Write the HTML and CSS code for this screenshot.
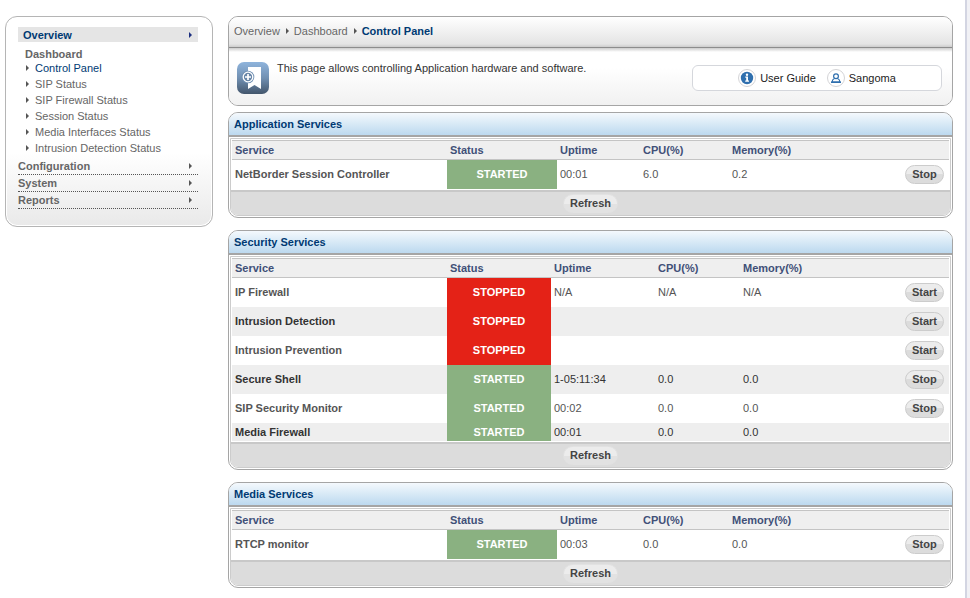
FILE: index.html
```html
<!DOCTYPE html>
<html lang="en">
<head>
<meta charset="UTF-8">
<meta name="viewport" content="width=device-width, initial-scale=1.0">
<title>Control Panel</title>
<link rel="stylesheet" href="styles.css">
</head>
<body>
<div class="page">
    <nav class="sidebar">
        <a class="menu-item active" href="#">Overview</a>
        <div class="submenu">
            <h3>Dashboard</h3>
            <ul>
                <li class="current"><a href="#">Control Panel</a></li>
                <li><a href="#">SIP Status</a></li>
                <li><a href="#">SIP Firewall Status</a></li>
                <li><a href="#">Session Status</a></li>
                <li><a href="#">Media Interfaces Status</a></li>
                <li><a href="#">Intrusion Detection Status</a></li>
            </ul>
        </div>
        <a class="menu-item" href="#">Configuration</a>
        <a class="menu-item" href="#">System</a>
        <a class="menu-item" href="#">Reports</a>
    </nav>

    <main class="content">
        <header class="intro">
            <div class="breadcrumb">
                <a href="#">Overview</a>
                <a href="#">Dashboard</a>
                <strong>Control Panel</strong>
            </div>
            <div class="intro-body">
                <svg class="intro-icon" width="32" height="32" viewBox="0 0 32 32">
                    <defs>
                        <linearGradient id="iconFill" x1="0" y1="0" x2="0" y2="1">
                            <stop offset="0" stop-color="#8fb4dc"/>
                            <stop offset="0.5" stop-color="#7190b2"/>
                            <stop offset="1" stop-color="#43566c"/>
                        </linearGradient>
                    </defs>
                    <rect width="32" height="32" rx="7" fill="url(#iconFill)"/>
                    <path d="M11 5h13v22l-6.500-4-6.500 4z" fill="#fff"/>
                    <circle cx="11" cy="15" r="6.300" fill="#6f8fb2"/>
                    <circle cx="11" cy="15" r="4.800" fill="#6886a8" stroke="#fff" stroke-width="1.300"/>
                    <path d="M11 12v6M8 15h6" stroke="#fff" stroke-width="1.700"/>
                </svg>
                <p>This page allows controlling Application hardware and software.</p>
                <div class="links">
                    <a href="#">
                        <svg width="18" height="18" viewBox="0 0 18 18">
                            <circle cx="9" cy="9" r="8.500" fill="#fff" stroke="#d3d3d6"/>
                            <circle cx="9" cy="9" r="6.200" fill="#2f6fae"/>
                            <circle cx="9" cy="5.700" r="1.200" fill="#fff"/>
                            <path d="M7.300 7.500h2.700v4h1v1.300H7.200v-1.300h1V8.700h-.9z" fill="#fff"/>
                        </svg>
                        User Guide
                    </a>
                    <a href="#">
                        <svg width="18" height="18" viewBox="0 0 18 18">
                            <circle cx="9" cy="9" r="8.500" fill="#fff" stroke="#d3d3d6"/>
                            <circle cx="9" cy="7.200" r="2.400" fill="#fff" stroke="#2f6fae" stroke-width="1.200"/>
                            <path d="M7.500 9.500c-1.500.5-2.300 1.800-2.500 3.500h8c-.2-1.700-1-3-2.500-3.500" fill="none" stroke="#2f6fae" stroke-width="1.200"/>
                            <path d="M4 13.200h10" stroke="#2f6fae" stroke-width="1.400"/>
                        </svg>
                        Sangoma
                    </a>
                </div>
            </div>
        </header>

        <section class="panel">
            <h2>Application Services</h2>
            <div class="panel-body">
                <table>
                    <thead>
                        <tr>
                            <th class="col-service">Service</th>
                            <th class="col-status">Status</th>
                            <th class="col-uptime">Uptime</th>
                            <th class="col-cpu">CPU(%)</th>
                            <th>Memory(%)</th>
                            <th class="col-action"></th>
                        </tr>
                    </thead>
                    <tbody>
                        <tr>
                            <td class="name">NetBorder Session Controller</td>
                            <td class="started">STARTED</td>
                            <td>00:01</td>
                            <td>6.0</td>
                            <td>0.2</td>
                            <td class="action"><button type="button">Stop</button></td>
                        </tr>
                    </tbody>
                </table>
                <div class="panel-footer"><button type="button" class="refresh">Refresh</button></div>
            </div>
        </section>

        <section class="panel">
            <h2>Security Services</h2>
            <div class="panel-body">
                <table class="security">
                    <thead>
                        <tr>
                            <th class="col-service">Service</th>
                            <th class="col-status">Status</th>
                            <th class="col-uptime">Uptime</th>
                            <th class="col-cpu">CPU(%)</th>
                            <th>Memory(%)</th>
                            <th class="col-action"></th>
                        </tr>
                    </thead>
                    <tbody>
                        <tr>
                            <td class="name">IP Firewall</td>
                            <td class="stopped">STOPPED</td>
                            <td>N/A</td>
                            <td>N/A</td>
                            <td>N/A</td>
                            <td class="action"><button type="button">Start</button></td>
                        </tr>
                        <tr>
                            <td class="name">Intrusion Detection</td>
                            <td class="stopped">STOPPED</td>
                            <td></td>
                            <td></td>
                            <td></td>
                            <td class="action"><button type="button">Start</button></td>
                        </tr>
                        <tr>
                            <td class="name">Intrusion Prevention</td>
                            <td class="stopped">STOPPED</td>
                            <td></td>
                            <td></td>
                            <td></td>
                            <td class="action"><button type="button">Start</button></td>
                        </tr>
                        <tr>
                            <td class="name">Secure Shell</td>
                            <td class="started">STARTED</td>
                            <td>1-05:11:34</td>
                            <td>0.0</td>
                            <td>0.0</td>
                            <td class="action"><button type="button">Stop</button></td>
                        </tr>
                        <tr>
                            <td class="name">SIP Security Monitor</td>
                            <td class="started">STARTED</td>
                            <td>00:02</td>
                            <td>0.0</td>
                            <td>0.0</td>
                            <td class="action"><button type="button">Stop</button></td>
                        </tr>
                        <tr>
                            <td class="name">Media Firewall</td>
                            <td class="started">STARTED</td>
                            <td>00:01</td>
                            <td>0.0</td>
                            <td>0.0</td>
                            <td></td>
                        </tr>
                    </tbody>
                </table>
                <div class="panel-footer"><button type="button" class="refresh">Refresh</button></div>
            </div>
        </section>

        <section class="panel">
            <h2>Media Services</h2>
            <div class="panel-body">
                <table>
                    <thead>
                        <tr>
                            <th class="col-service">Service</th>
                            <th class="col-status">Status</th>
                            <th class="col-uptime">Uptime</th>
                            <th class="col-cpu">CPU(%)</th>
                            <th>Memory(%)</th>
                            <th class="col-action"></th>
                        </tr>
                    </thead>
                    <tbody>
                        <tr>
                            <td class="name">RTCP monitor</td>
                            <td class="started">STARTED</td>
                            <td>00:03</td>
                            <td>0.0</td>
                            <td>0.0</td>
                            <td class="action"><button type="button">Stop</button></td>
                        </tr>
                    </tbody>
                </table>
                <div class="panel-footer"><button type="button" class="refresh">Refresh</button></div>
            </div>
        </section>
    </main>
</div>
</body>
</html>
```

FILE: styles.css
```css
* {
    box-sizing: border-box;
}

body {
    margin: 0;
    background-color: #f1f1f5;
    font-family: "Liberation Sans", Arial, Helvetica, sans-serif;
    font-size: 11px;
    line-height: 14px;
    color: #444;
}

a {
    color: #666;
    text-decoration: none;
}

h2, h3, p, ul {
    margin: 0;
    padding: 0;
    font-size: 11px;
}

.page {
    display: flex;
    align-items: flex-start;
    gap: 15px;
    min-height: 100vh;
    margin-right: 3px;
    padding: 16px 12px 10px 5px;
    border-right: 2px solid #d3d5e2;
    background-color: #fff;
}

/* side menu */
.sidebar {
    flex: 0 0 208px;
    padding: 10px 14px 17px 12px;
    border: 1px solid #b5b5b5;
    border-radius: 12px;
    background: linear-gradient(#fff 65%, #e9e9e9);
    box-shadow: inset 0 0 0 1px #fff;
}

.menu-item {
    display: flex;
    justify-content: space-between;
    align-items: center;
    height: 17px;
    padding-right: 6px;
    border-bottom: 1px dotted #555;
    font-weight: bold;
}

.menu-item::after,
.submenu li::before,
.breadcrumb a::after {
    content: "";
    border: 3px solid transparent;
    border-left-color: #555;
    border-right-width: 0;
}

.menu-item.active {
    height: 15px;
    padding-left: 5px;
    border-bottom: none;
    background-color: #e5e5e5;
    line-height: 12px;
    color: #003a73;
}

.menu-item.active::after {
    border-left-color: #1c2f80;
}

.submenu {
    padding: 6px 0 2px 7px;
}

.submenu h3 {
    line-height: 12px;
    color: #666;
}

.submenu ul {
    list-style: none;
}

.submenu li {
    display: flex;
    align-items: center;
    gap: 6px;
    height: 16px;
}

.submenu li::before {
    margin-left: 1px;
}

.submenu .current a {
    color: #003a73;
}

/* main column */
.content {
    flex: 1;
    min-width: 0;
}

.intro {
    margin-bottom: 6px;
    border: 1px solid #a5a5a5;
    border-radius: 10px;
    background-color: #fff;
    overflow: hidden;
}

.breadcrumb {
    display: flex;
    align-items: center;
    gap: 5px;
    height: 31px;
    padding: 0 0 2px 5px;
    border-bottom: 1px solid #8c8c8c;
    background: linear-gradient(#fff, #e4e4e4 90%, #ccc);
}

.breadcrumb a {
    display: flex;
    align-items: center;
    gap: 6px;
}

.breadcrumb strong {
    color: #003a73;
}

.intro-body {
    display: flex;
    align-items: flex-start;
    gap: 8px;
    height: 57px;
    padding: 14px 10px 0 8px;
    background: linear-gradient(#ccc, #fff 4px, #fff 20px, #f1f1f1);
}

.intro-body p {
    flex: 1;
    line-height: 12px;
    color: #333;
}

.links {
    display: flex;
    justify-content: center;
    align-items: center;
    gap: 11px;
    width: 250px;
    height: 26px;
    margin-top: 3px;
    border: 1px solid #d5d7dc;
    border-radius: 6px;
    background-color: #fff;
}

.links a {
    display: flex;
    align-items: center;
    gap: 4px;
    color: #222;
}

/* service panels */
.panel {
    margin-bottom: 12px;
    border: 1px solid #a5a5a5;
    border-radius: 10px;
    background-color: #fff;
    overflow: hidden;
}

.panel h2 {
    height: 24px;
    padding-left: 5px;
    border-bottom: 2px solid #a5a5a5;
    background: linear-gradient(#f4f9fd, #bcd9ef);
    line-height: 22px;
    color: #003a73;
}

.panel-body {
    margin: 1px;
    border: 1px solid #ccc;
    border-radius: 0 0 8px 8px;
    overflow: hidden;
}

table {
    width: calc(100% - 2px);
    margin: 1px;
    border-collapse: separate;
    border-spacing: 0;
    table-layout: fixed;
}

th {
    height: 20px;
    padding: 0 3px;
    border-top: 1px solid #c4c4c4;
    border-bottom: 1px solid #c4c4c4;
    background-color: #efefef;
    text-align: left;
    color: #3f5078;
}

.col-service {
    width: 215px;
}

.col-status {
    width: 110px;
}

.col-uptime {
    width: 83px;
}

.col-cpu {
    width: 89px;
}

.col-action {
    width: 60px;
}

.security .col-status,
.security .col-uptime {
    width: 104px;
}

.security .col-cpu {
    width: 85px;
}

td {
    height: 18px;
    padding: 0 3px 1px;
    color: #555;
}

tbody tr:nth-child(even) td {
    background-color: #eee;
    color: #333;
}

tbody td.name {
    font-weight: bold;
}

tbody td.started,
tbody tr:nth-child(even) td.started {
    background-color: #8ab181;
    color: #fff;
    font-weight: bold;
    text-align: center;
}

tbody td.stopped,
tbody tr:nth-child(even) td.stopped {
    background-color: #e42217;
    color: #fff;
    font-weight: bold;
    text-align: center;
}

td.action {
    height: 29px;
    padding-right: 5px;
    text-align: right;
}

button {
    min-width: 39px;
    height: 19px;
    padding: 0 6px 1px;
    border: 1px solid #ccc;
    border-radius: 10px;
    background: linear-gradient(#ececec 50%, #dcdcdc 50%);
    font-family: inherit;
    font-size: 11px;
    font-weight: bold;
    line-height: 14px;
    color: #444;
    vertical-align: middle;
    cursor: pointer;
}

.panel-footer {
    display: flex;
    justify-content: center;
    padding: 2px 0;
    border-top: 2px solid #c8c8c8;
    background-color: #dcdcdc;
}

.refresh {
    border-color: #e2e2e2;
    background: linear-gradient(#ececec 50%, #e2e2e2 50%);
}
```
